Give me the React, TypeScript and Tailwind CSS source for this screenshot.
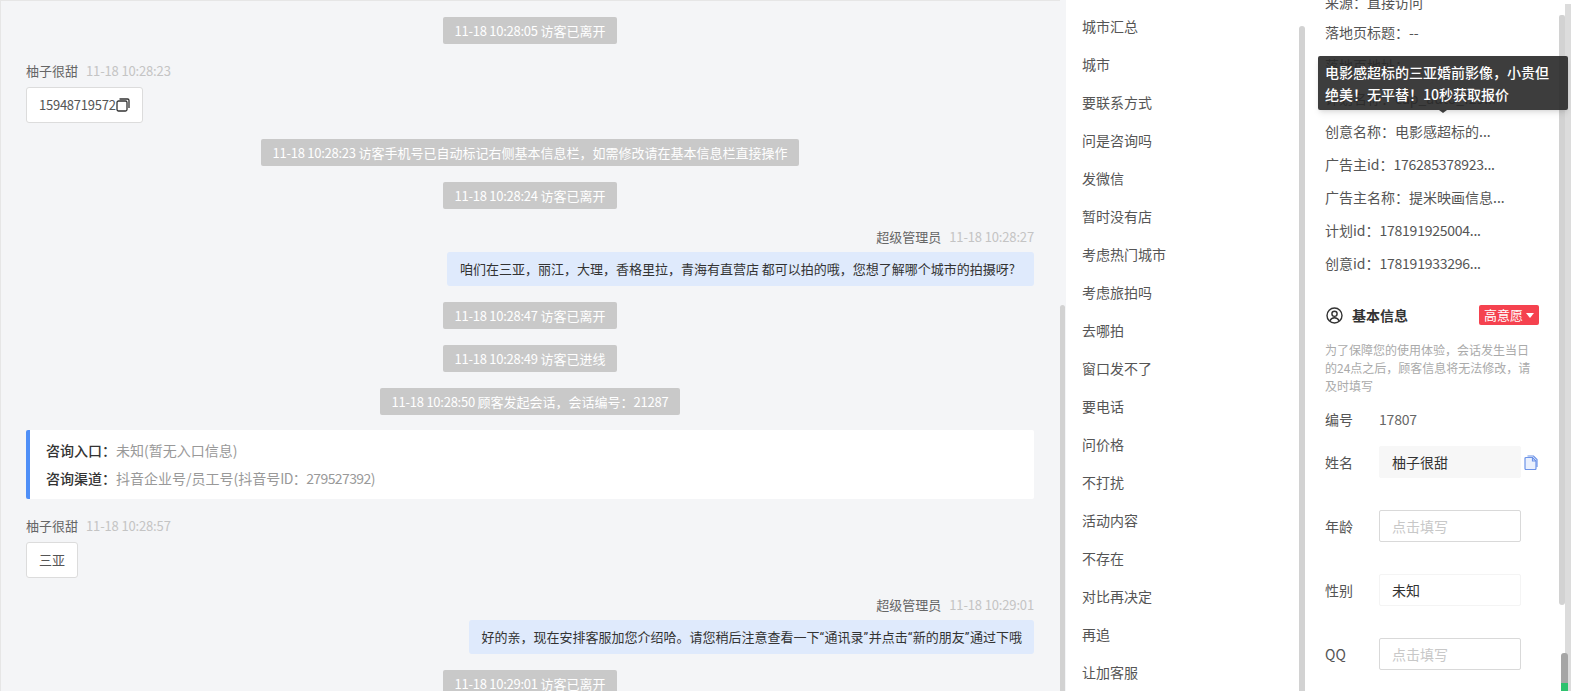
import React from "react";

const FONT = "font-['Noto_Sans_CJK_SC','Noto_Sans',sans-serif]";

function N({ children }: { children: React.ReactNode }) {
  return <span className="tracking-[-0.25px]">{children}</span>;
}

function Q({ children }: { children: React.ReactNode }) {
  return <span className="font-['Roboto',sans-serif] tracking-[0.5px]">{children}</span>;
}

function Sys({ children, mt }: { children: React.ReactNode; mt: string }) {
  return (
    <div className={`flex justify-center ${mt}`}>
      <div className="h-[27px] rounded-[2px] bg-[#c9c9c9] px-3 text-[13px] leading-[27px] text-white">{children}</div>
    </div>
  );
}

function Meta({ name, time, right, mt }: { name: string; time: string; right?: boolean; mt: string }) {
  return (
    <div className={`flex h-[20px] items-center gap-2 text-[13px] ${right ? "justify-end" : ""} ${mt}`}>
      <span className="text-[#666]">{name}</span>
      <span className="tracking-[-0.15px] text-[#c4c4c4]">{time}</span>
    </div>
  );
}

function Visitor({ children }: { children: React.ReactNode }) {
  return (
    <div className="mt-[6px] flex">
      <div className="flex h-[36px] items-center rounded-[3px] border border-[#dcdcdc] bg-white px-3 text-[13px] text-[#555]">{children}</div>
    </div>
  );
}

function Agent({ children, wide }: { children: React.ReactNode; wide?: boolean }) {
  return (
    <div className="mt-[5px] flex justify-end">
      <div className={`h-[34px] rounded-[3px] bg-[#dfeafc] text-[13px] leading-[34px] text-[#333] ${wide ? "pl-[13px] pr-[19px]" : "px-3"}`}>{children}</div>
    </div>
  );
}

function Chat() {
  return (
    <div className="flex-1 border-l border-t border-[#e6e6e6] bg-[#f4f5f7] pl-[25px] pr-[26px] pt-[16px]">
      <Sys mt=""><N>11-18 10:28:05 </N>访客已离开</Sys>
      <Meta name="柚子很甜" time="11-18 10:28:23" mt="mt-[17px]" />
      <Visitor>
        <N>15948719572</N>
        <svg width="14" height="14" viewBox="0 0 14 14" fill="none" stroke="#333" strokeWidth="1.3">
          <rect x="1" y="3" width="10" height="10" rx="1.5" />
          <path d="M3.5 1h8a1.5 1.5 0 0 1 1.5 1.5V10" />
        </svg>
      </Visitor>
      <Sys mt="mt-[16px]"><N>11-18 10:28:23 </N>访客手机号已自动标记右侧基本信息栏，如需修改请在基本信息栏直接操作</Sys>
      <Sys mt="mt-[16px]"><N>11-18 10:28:24 </N>访客已离开</Sys>
      <Meta name="超级管理员" time="11-18 10:28:27" right mt="mt-[18px]" />
      <Agent wide>咱们在三亚，丽江，大理，香格里拉，青海有直营店 都可以拍的哦，您想了解哪个城市的拍摄呀?</Agent>
      <Sys mt="mt-[16px]"><N>11-18 10:28:47 </N>访客已离开</Sys>
      <Sys mt="mt-[16px]"><N>11-18 10:28:49 </N>访客已进线</Sys>
      <Sys mt="mt-[16px]"><N>11-18 10:28:50 </N>顾客发起会话，会话编号：<N>21287</N></Sys>
      <div className="mt-[15px] flex h-[69px] flex-col justify-center gap-[8px] rounded-[2px] border-l-4 border-[#4f8ff7] bg-white pb-[2px] pl-[16px] text-[14px] leading-[20px] text-[#999]">
        <div><b className="font-medium text-[#333]">咨询入口：</b>未知(暂无入口信息)</div>
        <div><b className="font-medium text-[#333]">咨询渠道：</b>抖音企业号/员工号(抖音号<span className="tracking-[-0.6px]">ID：279527392)</span></div>
      </div>
      <Meta name="柚子很甜" time="11-18 10:28:57" mt="mt-[17px]" />
      <Visitor>三亚</Visitor>
      <Meta name="超级管理员" time="11-18 10:29:01" right mt="mt-[17px]" />
      <Agent>好的亲，现在安排客服加您介绍哈。请您稍后注意查看一下<Q>“</Q>通讯录<Q>”</Q>并点击<Q>“</Q>新的朋友<Q>”</Q>通过下哦</Agent>
      <Sys mt="mt-[16px]"><N>11-18 10:29:01 </N>访客已离开</Sys>
    </div>
  );
}

const MENU = ["城市汇总","城市","要联系方式","问是咨询吗","发微信","暂时没有店","考虑热门城市","考虑旅拍吗","去哪拍","窗口发不了","要电话","问价格","不打扰","活动内容","不存在","对比再决定","再追","让加客服"];

function Menu() {
  return (
    <div className="flex w-[233px] flex-col bg-white pl-[16px] pt-[7px]">
      {MENU.map((m) => (
        <div key={m} className="h-[38px] text-[14px] leading-[38px] text-[#555]">{m}</div>
      ))}
    </div>
  );
}

function Line({ children }: { children: React.ReactNode }) {
  return <div className="h-[33px] text-[14px] leading-[33px] text-[#555]">{children}</div>;
}

function Field({ label, value, placeholder, bg, border }: { label: string; value?: string; placeholder?: string; bg?: string; border?: string }) {
  return (
    <div className="flex h-[32px] items-center text-[14px]">
      <div className="w-[54px] text-[#555]">{label}</div>
      <div className={`flex h-[32px] w-[142px] items-center rounded-[2px] border px-3 ${bg ?? "bg-white"} ${border ?? "border-[#f4f4f4]"} ${placeholder ? "text-[#c8c8c8]" : "text-[#333]"}`}>
        {value ?? placeholder}
      </div>
    </div>
  );
}

function Info() {
  return (
    <div className="relative flex-1 bg-white pl-[20px]">
      <div className="-mt-[12px]">
        <div className="h-[28px] text-[14px] leading-[28px] text-[#555]">来源：直接访问</div>
        <Line>落地页标题：--</Line>
        <Line>落地页地址：</Line>
        <Line>计划名称：cap_auto_f29...</Line>
        <Line>创意名称：电影感超标的...</Line>
        <Line>广告主id：<N>176285378923...</N></Line>
        <Line>广告主名称：提米映画信息...</Line>
        <Line>计划id：<N>178191925004...</N></Line>
        <Line>创意id：<N>178191933296...</N></Line>
      </div>
      <div className="mt-[25px] flex h-[20px] items-center justify-between pr-[20px]">
        <div className="ml-[1px] flex items-center gap-[9px]">
          <svg width="17" height="17" viewBox="0 0 17 17" fill="none" stroke="#333" strokeWidth="1.4">
            <circle cx="8.5" cy="8.5" r="7.5" />
            <circle cx="8.5" cy="6.8" r="2.6" />
            <path d="M3.8 14c1-2.3 2.6-3.3 4.7-3.3s3.7 1 4.7 3.3" />
          </svg>
          <span className="text-[14px] font-bold text-[#333]">基本信息</span>
        </div>
        <div className="flex h-[20px] w-[60px] items-center justify-center gap-[3px] rounded-[2px] bg-[#f5424f] text-[13px] text-white">
          高意愿
          <span className="h-0 w-0 border-x-[4px] border-t-[5px] border-x-transparent border-t-white" />
        </div>
      </div>
      <div className="mt-[16px] w-[208px] text-[12px] leading-[18px] text-[#aaa]">为了保障您的使用体验，会话发生当日的24点之后，顾客信息将无法修改，请及时填写</div>
      <div className="mt-[14px] flex h-[20px] items-center text-[14px]">
        <div className="w-[54px] text-[#555]">编号</div>
        <div className="tracking-[-0.2px] text-[#666]">17807</div>
      </div>
      <div className="mt-[17px] flex flex-col gap-[32px]">
        <div className="flex items-center">
          <Field label="姓名" value="柚子很甜" bg="bg-[#f7f7f7]" border="border-[#f7f7f7]" />
          <svg className="ml-[3px]" width="14" height="15" viewBox="0 0 14 15" fill="none" stroke="#6c93e8" strokeWidth="1.2">
            <path d="M1 3.5A1 1 0 0 1 2 2.5h6.5L12 6v7.5a1 1 0 0 1-1 1H2a1 1 0 0 1-1-1z" fill="#eaf0fd" />
            <path d="M3.5 1h6l3.5 3.5V12" />
            <path d="M8.5 2.5V6H12" />
          </svg>
        </div>
        <Field label="年龄" placeholder="点击填写" border="border-[#d9d9d9]" />
        <Field label="性别" value="未知" />
        <Field label="QQ" placeholder="点击填写" border="border-[#d9d9d9]" />
      </div>
      <div className="absolute left-[13px] top-[56px] z-10 h-[54px] w-[250px] rounded-[2px] bg-[rgba(40,40,40,0.9)] px-[7px] py-[5px] text-[14px] font-medium leading-[22px] text-white shadow-md">
        电影感超标的三亚婚前影像，小贵但绝美！无平替！10秒获取报价
        <span className="absolute -bottom-[3px] left-[121px] h-0 w-0 border-x-[4px] border-t-[3px] border-x-transparent border-t-[#3c3c3c]" />
      </div>
    </div>
  );
}

export default function App() {
  return (
    <div className={`${FONT} relative flex h-[691px] w-[1571px] overflow-hidden bg-white`}>
      <div className="flex w-[1066px] shrink-0 bg-[#f4f5f7]">
        <Chat />
        <div className="w-[6px] shrink-0 pr-[1px] pt-[305px]">
          <div className="h-full w-[5px] rounded-t-[3px] bg-[#d2d2d2]" />
        </div>
      </div>
      <Menu />
      <div className="w-[6px] shrink-0 bg-white pt-[26px]">
        <div className="h-full rounded-t-[3px] bg-[#d2d2d2]" />
      </div>
      <Info />
      <div className="w-[6px] shrink-0 bg-white pb-[86px] pt-[15px]">
        <div className="h-full rounded-b-[3px] rounded-t-[2px] bg-[#d2d2d2]" />
      </div>
      <div className="w-[6px] shrink-0 bg-white pt-[4px]">
        <div className="h-full bg-[#dcdcdc]" />
      </div>
      <div className="absolute left-[1561px] top-[653px] flex h-[38px] w-[7px] flex-col">
        <div className="flex-1 rounded-t-[3px] bg-[#a6a6a6]" />
        <div className="h-[8px] bg-[#2ec26e]" />
      </div>
    </div>
  );
}
